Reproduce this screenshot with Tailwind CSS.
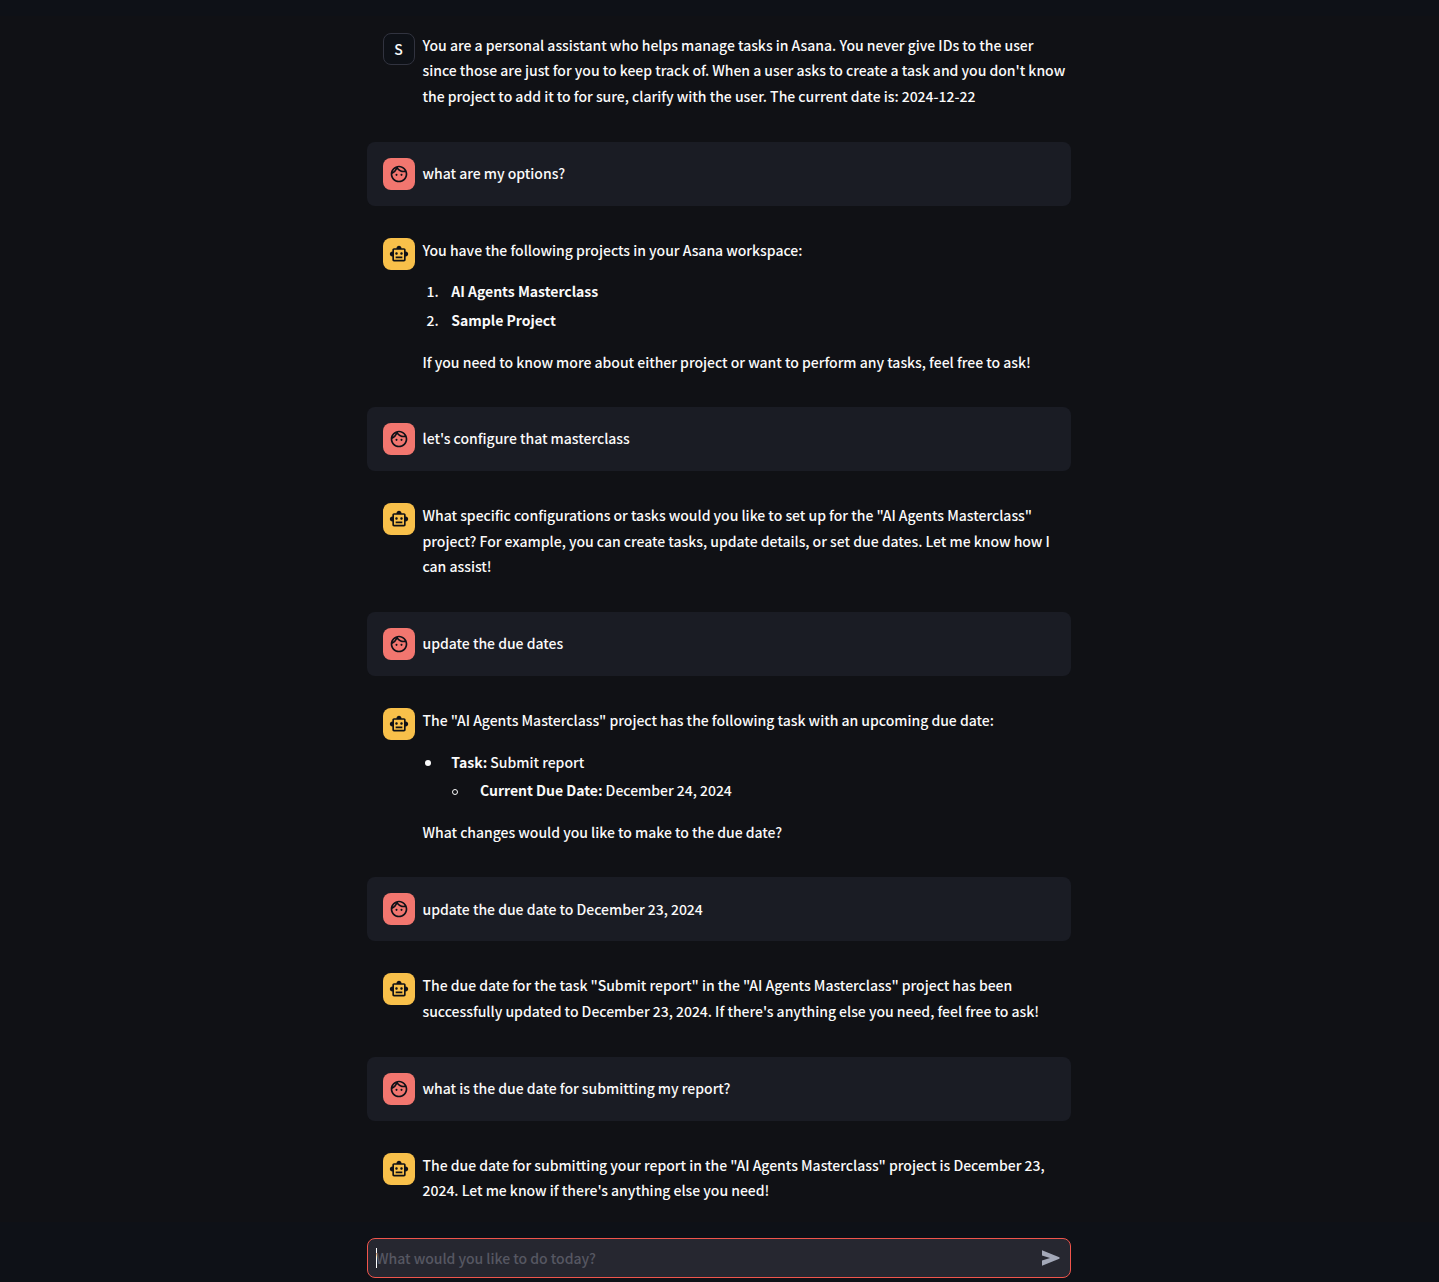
<!DOCTYPE html>
<html lang="en">
<head>
<meta charset="utf-8">
<title>Asana assistant</title>
<script src="https://cdn.jsdelivr.net/npm/@tailwindcss/browser@4"></script>
</head>
<body class="bg-[#101115] text-[#fafafa] h-[1282px] overflow-hidden flex flex-col font-['Noto_Sans_CJK_SC',sans-serif] text-[14px] leading-[25.6px] tracking-[-0.018px] font-medium whitespace-nowrap">
<svg class="hidden">
  <symbol id="face" viewBox="0 0 24 24"><path d="M10.25 13a1.25 1.25 0 1 1-2.5 0 1.25 1.25 0 0 1 2.5 0zM15 11.75a1.25 1.25 0 1 0 0 2.5 1.25 1.25 0 0 0 0-2.5zm7 .25c0 5.52-4.48 10-10 10S2 17.52 2 12 6.48 2 12 2s10 4.48 10 10zM10.66 4.12C12.06 6.44 14.6 8 17.5 8c.46 0 .91-.05 1.34-.12C17.44 5.56 14.9 4 12 4c-.46 0-.91.05-1.34.12zM4.42 9.47a8.046 8.046 0 0 0 3.66-4.44 8.046 8.046 0 0 0-3.66 4.44zM20 12c0-.78-.12-1.53-.33-2.24-.7.15-1.42.24-2.17.24a9.974 9.974 0 0 1-7.76-3.69A10.016 10.016 0 0 1 4 11.86c.01.04 0 .09 0 .14 0 4.41 3.59 8 8 8s8-3.59 8-8z"/></symbol>
  <symbol id="bot" viewBox="0 0 24 24"><path d="M20 9V7c0-1.1-.9-2-2-2h-3c0-1.66-1.34-3-3-3S9 3.34 9 5H6c-1.1 0-2 .9-2 2v2c-1.66 0-3 1.34-3 3s1.34 3 3 3v4c0 1.1.9 2 2 2h12c1.1 0 2-.9 2-2v-4c1.66 0 3-1.34 3-3s-1.34-3-3-3zm-2 10H6V7h12v12zm-9-6c-.83 0-1.5-.67-1.5-1.5S8.17 10 9 10s1.5.67 1.5 1.5S9.83 13 9 13zm7.5-1.5c0 .83-.67 1.5-1.5 1.5s-1.5-.67-1.5-1.5.67-1.5 1.5-1.5 1.5.67 1.5 1.5zM8 15h8v2H8v-2z"/></symbol>
</svg>
<header class="h-4 shrink-0 bg-[#0e1117]"></header>
<main class="w-[704px] ml-[367px] mt-[0.8px] flex-1 min-h-0 flex flex-col gap-4">
  <section class="flex gap-[7.5px] p-4 pb-[15.94px]">
    <div class="size-8 shrink-0 rounded-lg border border-[#31333f] bg-[#0e1117] flex items-center justify-center pt-0.5 pr-px">S</div>
    <p>You are a personal assistant who helps manage tasks in Asana. You never give IDs to the user<br>since those are just for you to keep track of. When a user asks to create a task and you don't know<br>the project to add it to for sure, clarify with the user. The current date is: 2024-12-22</p>
  </section>
  <section class="flex gap-[7.5px] p-4 rounded-lg bg-[#1a1c24] items-center">
    <div class="size-8 shrink-0 rounded-lg bg-[#f2766f] text-[#0e1117] flex items-center justify-center"><svg class="size-5 fill-current"><use href="#face"/></svg></div>
    <p>what are my options?</p>
  </section>
  <section class="flex gap-[7.5px] p-4">
    <div class="size-8 shrink-0 rounded-lg bg-[#f8c04a] text-[#0e1117] flex items-center justify-center"><svg class="size-5 fill-current"><use href="#bot"/></svg></div>
    <div class="flex flex-col gap-4">
      <p>You have the following projects in your Asana workspace:</p>
      <ol class="flex flex-col gap-[3.2px] font-bold">
        <li class="flex"><span class="w-[28.8px] pl-1 font-medium">1.</span>AI Agents Masterclass</li>
        <li class="flex"><span class="w-[28.8px] pl-1 font-medium">2.</span>Sample Project</li>
      </ol>
      <p class="pt-[0.4px] -mb-[0.4px]">If you need to know more about either project or want to perform any tasks, feel free to ask!</p>
    </div>
  </section>
  <section class="flex gap-[7.5px] p-4 rounded-lg bg-[#1a1c24] items-center">
    <div class="size-8 shrink-0 rounded-lg bg-[#f2766f] text-[#0e1117] flex items-center justify-center"><svg class="size-5 fill-current"><use href="#face"/></svg></div>
    <p>let's configure that masterclass</p>
  </section>
  <section class="flex gap-[7.5px] p-4">
    <div class="size-8 shrink-0 rounded-lg bg-[#f8c04a] text-[#0e1117] flex items-center justify-center"><svg class="size-5 fill-current"><use href="#bot"/></svg></div>
    <p>What specific configurations or tasks would you like to set up for the "AI Agents Masterclass"<br>project? For example, you can create tasks, update details, or set due dates. Let me know how I<br>can assist!</p>
  </section>
  <section class="flex gap-[7.5px] p-4 rounded-lg bg-[#1a1c24] items-center">
    <div class="size-8 shrink-0 rounded-lg bg-[#f2766f] text-[#0e1117] flex items-center justify-center"><svg class="size-5 fill-current"><use href="#face"/></svg></div>
    <p>update the due dates</p>
  </section>
  <section class="flex gap-[7.5px] p-4">
    <div class="size-8 shrink-0 rounded-lg bg-[#f8c04a] text-[#0e1117] flex items-center justify-center"><svg class="size-5 fill-current"><use href="#bot"/></svg></div>
    <div class="flex flex-col gap-4">
      <p>The "AI Agents Masterclass" project has the following task with an upcoming due date:</p>
      <ul class="flex flex-col gap-[3.2px]">
        <li class="flex items-center pt-[0.4px] -mb-[0.4px]"><span class="w-[28.8px] pl-[2.5px] pt-px"><i class="block size-[5.5px] rounded-full bg-[#fafafa]"></i></span><span><b class="font-bold">Task:</b> Submit report</span></li>
        <li class="flex items-center pl-[28.8px]"><span class="w-[28.8px] pl-px pt-px"><i class="block size-[6px] rounded-full border border-[#fafafa]"></i></span><span><b class="font-bold">Current Due Date:</b> December 24, 2024</span></li>
      </ul>
      <p>What changes would you like to make to the due date?</p>
    </div>
  </section>
  <section class="flex gap-[7.5px] p-4 rounded-lg bg-[#1a1c24] items-center">
    <div class="size-8 shrink-0 rounded-lg bg-[#f2766f] text-[#0e1117] flex items-center justify-center"><svg class="size-5 fill-current"><use href="#face"/></svg></div>
    <p class="pt-px">update the due date to December 23, 2024</p>
  </section>
  <section class="flex gap-[7.5px] p-4">
    <div class="size-8 shrink-0 rounded-lg bg-[#f8c04a] text-[#0e1117] flex items-center justify-center"><svg class="size-5 fill-current"><use href="#bot"/></svg></div>
    <p>The due date for the task "Submit report" in the "AI Agents Masterclass" project has been<br>successfully updated to December 23, 2024. If there's anything else you need, feel free to ask!</p>
  </section>
  <section class="flex gap-[7.5px] p-4 rounded-lg bg-[#1a1c24] items-center">
    <div class="size-8 shrink-0 rounded-lg bg-[#f2766f] text-[#0e1117] flex items-center justify-center"><svg class="size-5 fill-current"><use href="#face"/></svg></div>
    <p>what is the due date for submitting my report?</p>
  </section>
  <section class="flex gap-[7.5px] p-4">
    <div class="size-8 shrink-0 rounded-lg bg-[#f8c04a] text-[#0e1117] flex items-center justify-center"><svg class="size-5 fill-current"><use href="#bot"/></svg></div>
    <p>The due date for submitting your report in the "AI Agents Masterclass" project is December 23,<br>2024. Let me know if there's anything else you need!</p>
  </section>
</main>
<footer class="h-[60px] shrink-0 bg-[#0e1117] pt-4 pl-[367px]">
  <div class="w-[704px] h-10 rounded-lg border border-[#f0554c] bg-[#262730] flex items-center pl-2 pr-[7px] text-[#565762]">
    <span class="w-px h-5 bg-white"></span>
    <span class="flex-1 -ml-px pt-0.5">What would you like to do today?</span>
    <svg class="size-6 fill-[#a3a8b8]" viewBox="0 0 24 24"><path d="M3 4.2L20.3 11.2Q21.2 12 20.3 12.8L3 19.8V14.4L11 12 3 9.6z"/></svg>
  </div>
</footer>
</body>
</html>
